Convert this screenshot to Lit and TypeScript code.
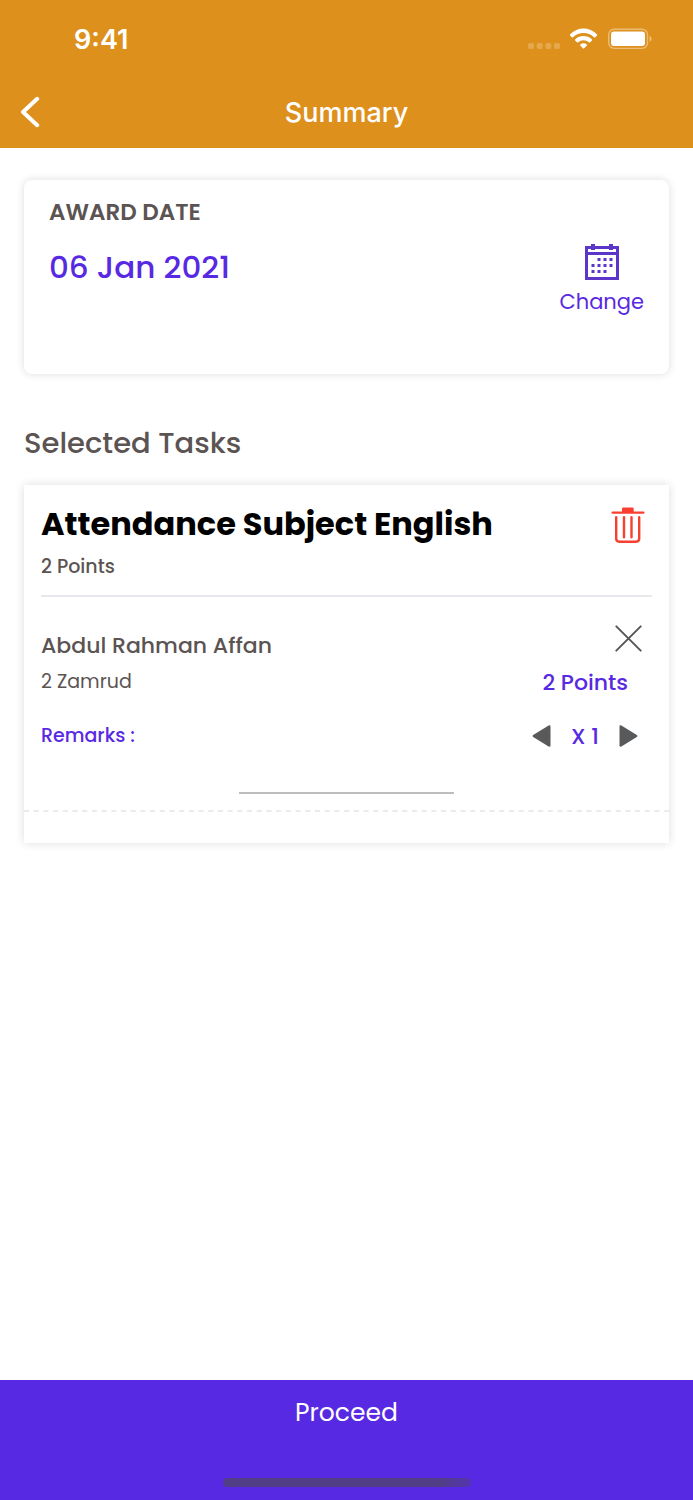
import { LitElement, html, svg, css } from "lit";
import { customElement, state } from "lit/decorators.js";

@customElement("app-root")
export class AppRoot extends LitElement {
  @state() private count = 1;

  static styles = css`
    :host {
      --brand: #5829e2;
      --ink: #5b5453;
      display: flex;
      flex-direction: column;
      min-height: 100vh;
      background: #fff;
      color: var(--ink);
      font-family: Poppins, Inter, "Open Sans", sans-serif;
    }
    * {
      box-sizing: border-box;
    }
    svg {
      display: block;
    }
    h1, h2, h3, p {
      margin: 0;
    }
    button {
      margin: 0;
      padding: 0;
      border: 0;
      background: none;
      color: inherit;
      font: inherit;
      cursor: pointer;
    }
    .top {
      background: #de901c;
      color: #fff;
      font-family: Inter, sans-serif;
    }
    .status {
      display: flex;
      align-items: center;
      justify-content: space-between;
      height: 76px;
      padding: 4px 40px 0 74px;
    }
    .time {
      font-size: 27px;
      font-weight: 600;
      line-height: 34px;
    }
    .nav {
      display: grid;
      grid-template-columns: 48px 1fr 48px;
      align-items: center;
      height: 72px;
    }
    .back {
      padding-left: 20px;
    }
    .title {
      padding-top: 2px;
      font-size: 27px;
      font-weight: 500;
      line-height: 32px;
      text-align: center;
    }
    main {
      flex: 1;
      padding: 32px 24px;
    }
    .card {
      background: #fff;
      box-shadow: 0 0 9px rgba(0, 0, 0, 0.14);
    }
    .award {
      display: flex;
      justify-content: space-between;
      min-height: 194px;
      padding: 16px 25px;
      border-radius: 8px;
    }
    .label {
      font-size: 23px;
      font-weight: 600;
      line-height: 32px;
    }
    .date {
      margin-top: 16px;
      color: var(--brand);
      font-size: 31px;
      font-weight: 500;
      line-height: 46px;
    }
    .change {
      display: flex;
      flex-direction: column;
      align-items: center;
      align-self: flex-start;
      gap: 6px;
      margin-top: 48px;
      color: var(--brand);
      font-size: 21px;
      font-weight: 400;
      line-height: 32px;
    }
    .section {
      margin: 46px 0 18px;
      font-size: 29px;
      font-weight: 500;
      line-height: 47px;
    }
    .task-head {
      display: flex;
      justify-content: space-between;
      align-items: flex-start;
      margin: 0 17px;
      padding: 16px 0 12px;
      border-bottom: 2px solid #e8e8ec;
    }
    .task-name {
      margin-bottom: 4px;
      color: #000;
      font-size: 32px;
      font-weight: 700;
      line-height: 46px;
    }
    .small {
      font-size: 19px;
      line-height: 32px;
    }
    .medium {
      font-weight: 500;
    }
    .trash {
      padding: 6px 7px;
    }
    .student {
      display: grid;
      grid-template-columns: 1fr auto;
      grid-template-rows: 40px 34px 20px 34px;
      align-items: center;
      padding: 28px 17px 0;
    }
    .student-name {
      font-size: 22px;
      font-weight: 500;
    }
    .remove {
      align-self: start;
      justify-self: end;
      margin-right: 10px;
    }
    .points {
      justify-self: end;
      margin-right: 24px;
      color: var(--brand);
      font-size: 22px;
      font-weight: 500;
    }
    .remarks {
      grid-row: 4;
      color: var(--brand);
    }
    .stepper {
      grid-row: 4;
      display: flex;
      align-items: center;
      gap: 20px;
      margin-right: 14px;
      color: var(--brand);
      font-size: 22px;
      font-weight: 500;
    }
    .field {
      display: block;
      width: 33.4%;
      height: 41px;
      margin: 0 auto 16px;
      padding: 0;
      border: 0;
      border-bottom: 2px solid #bdbdbd;
      border-radius: 0;
      outline: 0;
      background: none;
      color: var(--ink);
      font: inherit;
      font-size: 19px;
      text-align: center;
    }
    .tasks {
      padding-bottom: 31px;
    }
    .dashes {
      width: 100%;
      height: 2px;
    }
    .proceed {
      display: flex;
      flex-direction: column;
      justify-content: space-between;
      align-items: center;
      width: 100%;
      height: 120px;
      padding: 17px 0 13px;
      background: var(--brand);
      color: #fff;
      font-size: 25px;
      font-weight: 400;
      line-height: 32px;
    }
    .home {
      width: 248px;
      height: 9px;
      border-radius: 5px;
      background: linear-gradient(90deg, #523e87 88%, #5635b0);
    }
  `;

  private step(delta: number) {
    this.count = Math.max(1, this.count + delta);
  }

  render() {
    const dots = [
      [6, 0], [12, 0], [18, 0],
      [0, 6], [6, 6], [12, 6], [18, 6],
      [0, 12], [6, 12], [12, 12],
    ];
    return html`
      <header class="top">
        <div class="status">
          <span class="time">9:41</span>
          <svg width="125" height="24" viewBox="0 0 125 24" fill="#fff" aria-hidden="true">
            <g fill-opacity=".22">
              <rect x="0" y="15" width="6" height="6" rx="2" />
              <rect x="8.700" y="15" width="6" height="6" rx="2" />
              <rect x="17.400" y="15" width="6" height="6" rx="2" />
              <rect x="26" y="15" width="6" height="6" rx="2" />
            </g>
            <path d="M42.200 6.300Q48 .6 55.500.6T68.900 6.300Q69.600 7 68.900 7.700L67.300 9.200Q66.700 9.700 66 9.200Q61.400 5 55.500 5T45 9.200Q44.400 9.700 43.800 9.200L42.200 7.700Q41.500 7 42.200 6.300Z" />
            <path d="M47.300 11.300Q50.800 8 55.500 8T63.800 11.300Q64.500 12 63.800 12.700L62 14.300Q61.400 14.800 60.800 14.300Q58.500 12.300 55.500 12.300T50.300 14.300Q49.700 14.800 49.100 14.300L47.300 12.700Q46.600 12 47.300 11.300Z" />
            <path d="M52.300 16.400Q53.600 15.200 55.500 15.200T58.800 16.400Q59.400 17 58.800 17.600L56.200 20.200Q55.500 20.900 54.800 20.200L52.300 17.600Q51.700 17 52.300 16.400Z" />
            <rect x="80.700" y="1.200" width="38.800" height="19.200" rx="5.500" fill="none" stroke="#fff" stroke-opacity=".4" stroke-width="1.400" />
            <rect x="83" y="3.600" width="34" height="14.400" rx="3" />
            <path d="M121.600 7.700Q123.600 8.500 123.600 10.800T121.600 13.800Z" fill-opacity=".45" />
          </svg>
        </div>
        <nav class="nav">
          <button class="back" aria-label="Back">
            <svg width="22" height="32" viewBox="0 0 22 32" fill="none" stroke="#fff" stroke-width="4" stroke-linecap="round" stroke-linejoin="round">
              <path d="M17.200 2.800L3 16L17.200 29.200" />
            </svg>
          </button>
          <h1 class="title">Summary</h1>
        </nav>
      </header>

      <main>
        <section class="card award">
          <div>
            <p class="label">AWARD DATE</p>
            <p class="date">06 Jan 2021</p>
          </div>
          <button class="change">
            <svg width="34" height="36" viewBox="0 0 34 36" fill="#5c35c9">
              <path fill-rule="evenodd" d="M0 2H34V36H0ZM3 5V8H31V5ZM3 11V33H31V11Z" />
              <rect x="6" y="0" width="4" height="6" />
              <rect x="24" y="0" width="4" height="6" />
              ${dots.map(([x, y]) => svg`<rect x=${6.5 + x} y=${14 + y} width="3" height="3" />`)}
            </svg>
            Change
          </button>
        </section>

        <h2 class="section">Selected Tasks</h2>

        <section class="card tasks">
          <div class="task-head">
            <div>
              <h3 class="task-name">Attendance Subject English</h3>
              <p class="small medium">2 Points</p>
            </div>
            <button class="trash" aria-label="Delete task">
              <svg width="34" height="37" viewBox="0 0 34 37" fill="none" stroke="#f7402f" stroke-width="2.400" stroke-linecap="round">
                <path d="M1.700 5.600H32.300" />
                <path d="M11 5.600V2Q11 .6 12.400 .6H21.300Q22.700 .6 22.700 2V5.600Z" fill="#f7402f" stroke="none" />
                <path d="M5.200 10.200V31.500Q5.200 34.700 8.400 34.700H25Q28.200 34.700 28.200 31.500V10.200M13 10.200V30.200M20.500 10.200V30.200" />
              </svg>
            </button>
          </div>

          <div class="student">
            <span class="student-name">Abdul Rahman Affan</span>
            <button class="remove" aria-label="Remove student">
              <svg width="27" height="27" viewBox="0 0 27 27" fill="none" stroke="#555" stroke-width="1.900" stroke-linecap="round">
                <path d="M1.300 1.300L25.700 25.700M25.700 1.300L1.300 25.700" />
              </svg>
            </button>
            <span class="small">2 Zamrud</span>
            <span class="points">2 Points</span>
            <label class="small medium remarks" for="remarks">Remarks :</label>
            <div class="stepper">
              <button aria-label="Decrease" @click=${() => this.step(-1)}>
                <svg width="19" height="22" viewBox="0 0 19 22" fill="#58595b">
                  <path d="M16.600.5Q18.500 -.2 18.500 1.800V20.200Q18.500 22.200 16.600 21.500L1.200 12Q0 11 1.200 10Z" />
                </svg>
              </button>
              <span>X ${this.count}</span>
              <button aria-label="Increase" @click=${() => this.step(1)}>
                <svg width="19" height="22" viewBox="0 0 19 22" fill="#58595b">
                  <path d="M2.400.5Q.5 -.2 .5 1.800V20.200Q.5 22.200 2.400 21.500L17.800 12Q19 11 17.800 10Z" />
                </svg>
              </button>
            </div>
          </div>
          <input class="field" id="remarks" type="text" />
          <svg class="dashes" aria-hidden="true">
            <line x1="0" y1="1" x2="100%" y2="1" stroke="#ebebeb" stroke-width="2" stroke-dasharray="5 4.700" />
          </svg>
        </section>
      </main>

      <button class="proceed">
        <span>Proceed</span>
        <span class="home"></span>
      </button>
    `;
  }
}
